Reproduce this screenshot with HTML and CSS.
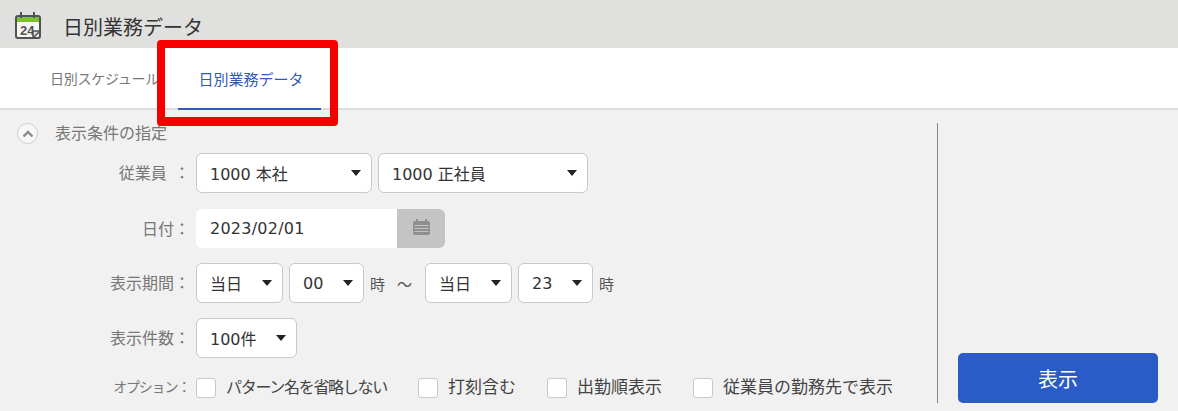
FILE: index.html
```html
<!DOCTYPE html>
<html lang="ja">
<head>
  <meta charset="UTF-8">
  <meta name="viewport" content="width=device-width, initial-scale=1.0">
  <title>日別業務データ</title>
  <link rel="stylesheet" href="styles.css">
</head>
<body>

  <!-- Header -->
  <div class="header">
    <svg class="header-icon" width="26" height="28" viewBox="0 0 26 28">
      <rect x="1" y="5" width="24" height="22" rx="2" fill="#f6f6f4" stroke="#4f5354" stroke-width="2"/>
      <rect x="2" y="6" width="22" height="5" fill="#7cc12f"/>
      <rect x="5" y="1" width="2" height="6" fill="#4f5354"/>
      <rect x="18" y="1" width="2" height="6" fill="#4f5354"/>
      <text x="5" y="24" class="header-icon-text">24</text>
      <path d="M18 27 L25 20 L18 20 Z" fill="#e0e0de" stroke="#4f5354" stroke-width="1.5"/>
    </svg>
    <span class="header-title">日別業務データ</span>
  </div>

  <!-- Tabs -->
  <div class="tabs">
    <div class="tab">日別スケジュール</div>
    <div class="tab active">日別業務データ</div>
  </div>
  <div class="highlight"></div>

  <div class="main">
    <div class="form">
      <div class="section-head">
        <span class="toggle">
          <svg width="12" height="8" viewBox="0 0 12 8"><path d="M1.5 6.5 L6 2 L10.5 6.5" fill="none" stroke="#8a8a8a" stroke-width="2.4"/></svg>
        </span>
        <span class="section-title">表示条件の指定</span>
      </div>

      <div class="row">
        <div class="label">従業員&nbsp; ：</div>
        <div class="select w-176"><span>1000 本社</span></div>
        <div class="select w-210"><span>1000 正社員</span></div>
      </div>

      <div class="row row-date">
        <div class="label">日付：</div>
        <div class="date-group">
          <input class="date-input" type="text" value="2023/02/01">
          <div class="date-button">
            <svg width="19" height="18" viewBox="0 0 19 18">
              <rect x="1" y="3" width="17" height="14" rx="2" fill="#8f8f8f"/>
              <rect x="4" y="1" width="2" height="3" fill="#8f8f8f"/>
              <rect x="13" y="1" width="2" height="3" fill="#8f8f8f"/>
              <rect x="2.5" y="7" width="14" height="1" fill="#c4c4c4"/>
              <rect x="2.5" y="10" width="14" height="1" fill="#c4c4c4"/>
              <rect x="2.5" y="13" width="14" height="1" fill="#c4c4c4"/>
            </svg>
          </div>
        </div>
      </div>

      <div class="row">
        <div class="label">表示期間：</div>
        <div class="select w-87"><span>当日</span></div>
        <div class="select w-75"><span>00</span></div>
        <span class="unit">時</span>
        <span class="unit tilde">～</span>
        <div class="select w-87"><span>当日</span></div>
        <div class="select w-75"><span>23</span></div>
        <span class="unit">時</span>
      </div>

      <div class="row">
        <div class="label">表示件数：</div>
        <div class="select w-101"><span>100件</span></div>
      </div>

      <div class="row options">
        <div class="label label-small">オプション：</div>
        <label class="check"><input type="checkbox"><span class="check-tight">パターン名を省略しない</span></label>
        <label class="check"><input type="checkbox"><span>打刻含む</span></label>
        <label class="check"><input type="checkbox"><span>出勤順表示</span></label>
        <label class="check"><input type="checkbox"><span>従業員の勤務先で表示</span></label>
      </div>
    </div>

    <div class="side">
      <button class="show-button">表示</button>
    </div>
  </div>

</body>
</html>
```
FILE: styles.css
```css
/* General Styles */
html, body {
  height: 100%;
}

body {
  font-family: "Noto Sans CJK JP", "Noto Sans", sans-serif;
  margin: 0;
  padding: 0;
  position: relative;
  overflow: hidden;
  background-color: #f1f1f1;
  color: #333;
}

/* Header */
.header {
  display: flex;
  align-items: center;
  height: 48px;
  padding-left: 15px;
  background-color: #e0e0de;
}

.header-icon {
  margin: 2px 22px 0 0;
}

.header-icon-text {
  font-family: "Liberation Sans", sans-serif;
  font-size: 13px;
  font-weight: bold;
  fill: #4f5354;
}

.header-title {
  margin-top: 4px;
  font-size: 20px;
  color: #333;
}

/* Tabs */
.tabs {
  display: flex;
  height: 60px;
  padding-left: 29px;
  background-color: #fff;
  border-bottom: 2px solid #dcdcdc;
}

.tab {
  display: flex;
  align-items: center;
  justify-content: center;
  box-sizing: border-box;
  width: 149px;
  height: 60px;
  padding-left: 2px;
  font-size: 14px;
  letter-spacing: -0.25px;
  color: #777;
}

.tab.active {
  width: 143px;
  padding-left: 3px;
  height: 62px;
  font-size: 15px;
  letter-spacing: 0;
  color: #2f5bb5;
  border-bottom: 2px solid #2f5bb5;
}

/* Red marker over the active tab */
.highlight {
  position: absolute;
  left: 157px;
  top: 40px;
  width: 165px;
  height: 69px;
  border: 8px solid #f80000;
  border-bottom-width: 9px;
  border-radius: 4px;
}

/* Main */
.main {
  display: flex;
  padding-top: 13px;
}

.form {
  width: 937px;
  height: 280px;
  border-right: 1px solid #888;
}

.section-head {
  display: flex;
  align-items: center;
  gap: 17px;
  height: 21px;
  padding-left: 17px;
  margin-bottom: 9px;
  font-size: 16px;
  color: #777;
}

.section-title {
  margin-top: -3px;
}

.toggle {
  display: flex;
  align-items: center;
  justify-content: center;
  width: 19px;
  height: 19px;
  background-color: #f8f8f8;
  border: 1px solid #ccc;
  border-radius: 50%;
}

/* Rows */
.row {
  display: flex;
  align-items: center;
  gap: 6px;
  height: 40px;
  margin-bottom: 15px;
  font-size: 16px;
}

.row-date {
  height: 39px;
  margin-top: 16px;
}

.label {
  width: 190px;
  flex-shrink: 0;
  margin-top: -2px;
  text-align: right;
  font-size: 16px;
  color: #777;
}

.label-small {
  margin-top: -4px;
  font-size: 14px;
  letter-spacing: -1.2px;
}

/* Select boxes */
.select {
  display: flex;
  align-items: center;
  justify-content: space-between;
  box-sizing: border-box;
  height: 40px;
  padding: 0 10px 0 13px;
  background-color: #fff;
  border: 1px solid #c8c8c8;
  border-radius: 6px;
  font-family: "DejaVu Sans", "Noto Sans CJK JP", sans-serif;
  color: #333;
}

.select::after {
  content: '';
  border-left: 5px solid transparent;
  border-right: 5px solid transparent;
  border-top: 6px solid #222;
}

.w-176 { width: 176px; }
.w-210 { width: 210px; }
.w-87 { width: 87px; }
.w-75 { width: 75px; }
.w-101 { width: 101px; }

.unit {
  color: #555;
  font-size: 15px;
}

.tilde {
  margin: 0 7px 0 6px;
}

/* Date */
.date-group {
  display: flex;
  height: 39px;
}

.date-input {
  box-sizing: border-box;
  width: 201px;
  height: 39px;
  padding: 0 14px;
  border: none;
  border-radius: 6px 0 0 6px;
  background-color: #fff;
  font-family: "DejaVu Sans", "Noto Sans CJK JP", sans-serif;
  font-size: 16px;
  letter-spacing: 0.25px;
  color: #333;
}

.date-button {
  display: flex;
  align-items: center;
  justify-content: center;
  box-sizing: border-box;
  width: 48px;
  padding-bottom: 3px;
  background-color: #c4c4c4;
  border-radius: 0 6px 6px 0;
}

/* Options */
.options {
  height: 20px;
  margin: 20px 0 0;
  gap: 0;
}

.options .label {
  margin-right: 6px;
}

.check {
  display: flex;
  align-items: center;
  gap: 10px;
  margin-right: 31px;
  font-size: 17px;
  color: #444;
}

.check span {
  margin-top: -5px;
}

.check .check-tight {
  font-size: 16px;
  letter-spacing: -1.3px;
}

.check input {
  appearance: none;
  box-sizing: border-box;
  width: 20px;
  height: 20px;
  margin: 0;
  background-color: #fff;
  border: 1px solid #c8c8c8;
  border-radius: 3px;
}

/* Side */
.side {
  display: flex;
  align-items: flex-end;
  height: 280px;
  padding-left: 20px;
}

.show-button {
  width: 200px;
  height: 50px;
  background-color: #2a5bc7;
  border: none;
  border-radius: 5px;
  font-family: inherit;
  font-size: 20px;
  color: #fff;
}
```
